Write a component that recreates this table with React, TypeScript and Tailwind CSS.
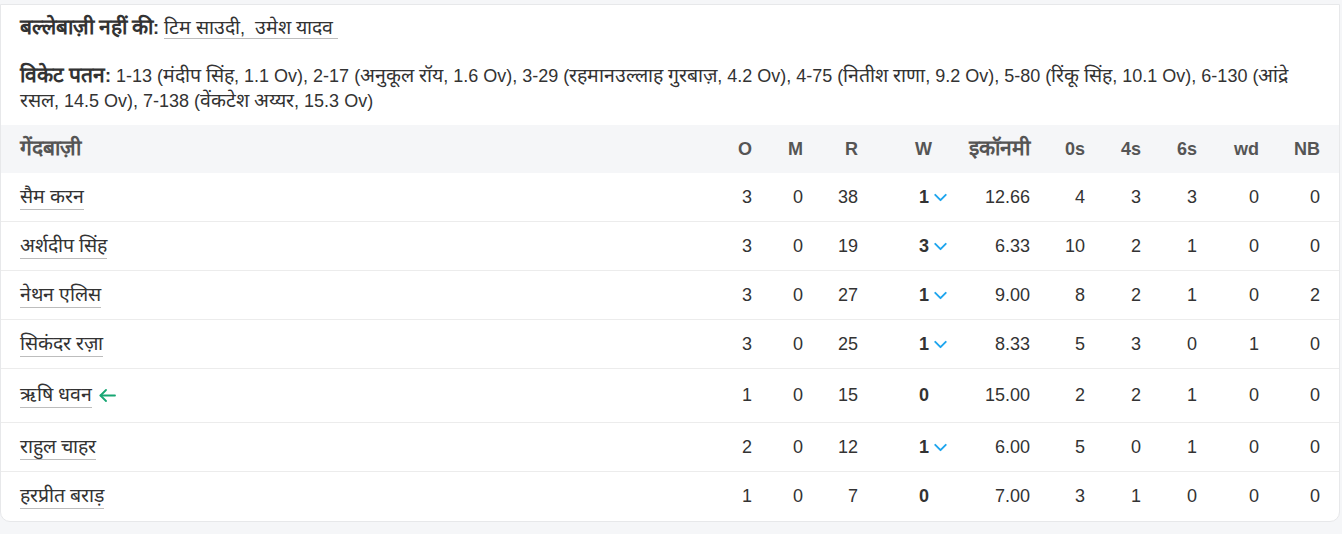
import React from 'react';
import { ChevronDown } from 'lucide-react';

interface BowlerRow {
  name: string;
  o: number;
  m: number;
  r: number;
  w: number;
  wickets: boolean;
  eco: string;
  zeros: number;
  fours: number;
  sixes: number;
  wd: number;
  nb: number;
  sub?: boolean;
}

const bowlers: BowlerRow[] = [
  { name: 'सैम करन', o: 3, m: 0, r: 38, w: 1, wickets: true, eco: '12.66', zeros: 4, fours: 3, sixes: 3, wd: 0, nb: 0 },
  { name: 'अर्शदीप सिंह', o: 3, m: 0, r: 19, w: 3, wickets: true, eco: '6.33', zeros: 10, fours: 2, sixes: 1, wd: 0, nb: 0 },
  { name: 'नेथन एलिस', o: 3, m: 0, r: 27, w: 1, wickets: true, eco: '9.00', zeros: 8, fours: 2, sixes: 1, wd: 0, nb: 2 },
  { name: 'सिकंदर रज़ा', o: 3, m: 0, r: 25, w: 1, wickets: true, eco: '8.33', zeros: 5, fours: 3, sixes: 0, wd: 1, nb: 0 },
  { name: 'ऋषि धवन', o: 1, m: 0, r: 15, w: 0, wickets: false, eco: '15.00', zeros: 2, fours: 2, sixes: 1, wd: 0, nb: 0, sub: true },
  { name: 'राहुल चाहर', o: 2, m: 0, r: 12, w: 1, wickets: true, eco: '6.00', zeros: 5, fours: 0, sixes: 1, wd: 0, nb: 0 },
  { name: 'हरप्रीत बराड़', o: 1, m: 0, r: 7, w: 0, wickets: false, eco: '7.00', zeros: 3, fours: 1, sixes: 0, wd: 0, nb: 0 },
];

const fallOfWickets =
  '1-13 (मंदीप सिंह, 1.1 Ov), 2-17 (अनुकूल रॉय, 1.6 Ov), 3-29 (रहमानउल्लाह गुरबाज़, 4.2 Ov), 4-75 (नितीश राणा, 9.2 Ov), 5-80 (रिंकू सिंह, 10.1 Ov), 6-130 (आंद्रे रसल, 14.5 Ov), 7-138 (वेंकटेश अय्यर, 15.3 Ov)';

// Devanagari falls back to a smaller face than the Latin text, so bump it a little
const Deva: React.FC<{ text: string; bold?: boolean }> = ({ text, bold }) => (
  <>
    {text.split(/([\u0900-\u097F]+)/).map((part, i) =>
      /[\u0900-\u097F]/.test(part) ? (
        <span key={i} className={bold ? 'text-[21px] leading-none' : 'text-[19.5px] leading-none'}>
          {part}
        </span>
      ) : (
        <React.Fragment key={i}>{part}</React.Fragment>
      )
    )}
  </>
);

const SubArrow = () => (
  <svg width="17" height="13" viewBox="0 0 17 13" fill="none" stroke="#17a673" strokeWidth="1.8" strokeLinecap="round" strokeLinejoin="round">
    <path d="M16 6.5H1.5" />
    <path d="M7 1 1.5 6.5 7 12" />
  </svg>
);

// name | O | M | R | W | eco | 0s | 4s | 6s | wd | NB
const cols = 'grid grid-cols-[1fr_50px_51px_55px_94px_78px_55px_56px_56px_62px_61px]';

const App: React.FC = () => {
  return (
    <div
      className="min-h-[534px] bg-[#f5f6f8] pt-[4px] pr-[2px] text-[18px] text-[#333]"
      style={{ fontFamily: '"Liberation Sans", Arial, sans-serif' }}
    >
      <div className="bg-white border border-[#e7e8ea] rounded-b-[10px]">
        {/* Did not bat + fall of wickets */}
        <div className="px-[19px] pt-[11px] pb-[11px] leading-[25px]">
          <p>
            <span className="font-bold">
              <Deva text="बल्लेबाज़ी नहीं की:" bold />
            </span>{' '}
            <span className="border-b border-[#bdbdbd] whitespace-pre">
              <Deva text="टिम साउदी,  " />
            </span>
            <span className="border-b border-[#bdbdbd] whitespace-pre">
              <Deva text="उमेश यादव " />
            </span>
          </p>
          <p className="mt-[23px]">
            <span className="font-bold">
              <Deva text="विकेट पतन:" bold />
            </span>{' '}
            <Deva text={fallOfWickets} />
          </p>
        </div>

        {/* Bowling table */}
        <div className={`${cols} items-center h-[48px] bg-[#f5f6f8] px-[19px] font-bold text-[#555]`}>
          <div>
            <Deva text="गेंदबाज़ी" bold />
          </div>
          <div className="text-right">O</div>
          <div className="text-right">M</div>
          <div className="text-right">R</div>
          <div className="flex justify-end">
            <span>W</span>
            <span className="w-[20px]" />
          </div>
          <div className="text-right">
            <Deva text="इकॉनमी" bold />
          </div>
          <div className="text-right">0s</div>
          <div className="text-right">4s</div>
          <div className="text-right">6s</div>
          <div className="text-right">wd</div>
          <div className="text-right">NB</div>
        </div>

        {bowlers.map((b, i) => (
          <div
            key={b.name}
            className={`${cols} items-center px-[19px] ${b.sub ? 'h-[54px]' : 'h-[49px]'} ${
              i < bowlers.length - 1 ? 'border-b border-[#ececec]' : ''
            }`}
          >
            <div className="flex items-center gap-[7px]">
              <span className="border-b border-[#bdbdbd] leading-[24px]">
                <Deva text={b.name} />
              </span>
              {b.sub && <SubArrow />}
            </div>
            <div className="text-right">{b.o}</div>
            <div className="text-right">{b.m}</div>
            <div className="text-right">{b.r}</div>
            <div className="flex justify-end items-center">
              <span className="font-bold">{b.w}</span>
              <span className="w-[23px] pl-[1px] flex justify-start">
                {b.wickets && <ChevronDown size={21} strokeWidth={2.2} className="text-[#1ea5ee]" />}
              </span>
            </div>
            <div className="text-right">{b.eco}</div>
            <div className="text-right">{b.zeros}</div>
            <div className="text-right">{b.fours}</div>
            <div className="text-right">{b.sixes}</div>
            <div className="text-right">{b.wd}</div>
            <div className="text-right">{b.nb}</div>
          </div>
        ))}
      </div>
    </div>
  );
};

export default App;
